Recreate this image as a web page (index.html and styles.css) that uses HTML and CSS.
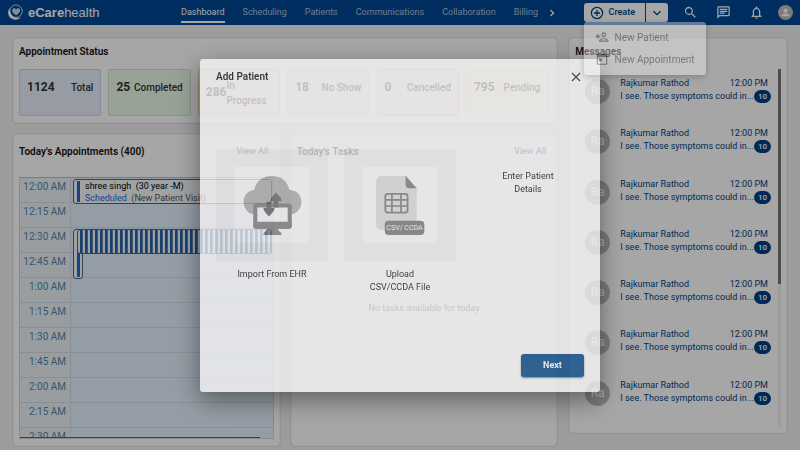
FILE: index.html
```html
<!DOCTYPE html>
<html lang="en">
<head>
<meta charset="utf-8">
<meta name="viewport" content="width=device-width, initial-scale=1">
<title>eCarehealth</title>
<link rel="stylesheet" href="styles.css">
</head>
<body>
<div class="app">
  <header class="topbar">
    <a class="brand" href="#">
      <svg class="brand-mark" viewBox="0 0 18 18" aria-hidden="true">
        <circle cx="9.5" cy="7.6" r="6.6" fill="none" stroke="#d5e3f5" stroke-width="1"/>
        <path d="M2.6 4.2C.4 8 .8 12.6 4.3 15.2c3.3 2.400 8.200 1.500 10.700-1.200-3 1.200-6.800.9-9.200-1.400C3.500 10.400 3 7.200 2.600 4.200z" fill="#fff"/>
        <path d="M9.800 11.800C6.600 9.900 5.200 8.300 5.500 6.300c.3-2 3-2.500 4.200-.6 1.300-1.900 4-1.300 4.100.8.100 2-1.500 3.600-4 5.300z" fill="#c6d9ef"/>
      </svg>
      <span class="brand-name"><b>eCare</b>health</span>
    </a>
    <nav class="nav">
      <a class="active" href="#">Dashboard</a>
      <a href="#">Scheduling</a>
      <a href="#">Patients</a>
      <a href="#">Communications</a>
      <a href="#">Collaboration</a>
      <a href="#">Billing</a>
      <svg class="nav-more" viewBox="0 0 6 8" aria-hidden="true"><path d="M1.500 1l3 3-3 3" fill="none" stroke="#fff" stroke-width="1.300"/></svg>
    </nav>
    <div class="tools">
      <div class="create">
        <button class="create-main" type="button">
          <svg viewBox="0 0 14 14" aria-hidden="true"><circle cx="7" cy="7" r="5.600"/><path d="M7 4v6M4 7h6"/></svg>Create
        </button>
        <button class="create-more" type="button" aria-label="More create options">
          <svg viewBox="0 0 14 14" aria-hidden="true"><path d="M3.500 5.200L7 8.700l3.500-3.500"/></svg>
        </button>
        <div class="menu">
          <a href="#"><svg viewBox="0 0 24 24" aria-hidden="true"><path d="M15 12a4 4 0 1 0 0-8 4 4 0 0 0 0 8zm0-6a2 2 0 1 1 0 4 2 2 0 0 1 0-4zm0 8c-2.700 0-8 1.300-8 4v2h16v-2c0-2.700-5.300-4-8-4zm-6 4c.2-.7 3.300-2 6-2s5.800 1.300 6 2zM6 15v-3h3v-2H6V7H4v3H1v2h3v3z"/></svg>New Patient</a>
          <a href="#"><svg viewBox="0 0 24 24" aria-hidden="true"><path d="M19 4h-1V2h-2v2H8V2H6v2H5a2 2 0 0 0-2 2v14c0 1.100.9 2 2 2h14a2 2 0 0 0 2-2V6a2 2 0 0 0-2-2zm0 16H5V9h14zM7 11h5v5H7z"/></svg>New Appointment</a>
        </div>
      </div>
      <button class="tool" type="button" aria-label="Search"><svg viewBox="0 0 24 24"><path d="M15.500 14h-.8l-.3-.3a6.500 6.500 0 1 0-.7.7l.3.3v.8l5 5 1.500-1.500zm-6 0a4.500 4.500 0 1 1 0-9 4.500 4.500 0 0 1 0 9z"/></svg></button>
      <button class="tool" type="button" aria-label="Chat"><svg viewBox="0 0 24 24"><path d="M4 4h16v12H5.200L4 17.200zm0-2a2 2 0 0 0-2 2v18l4-4h14a2 2 0 0 0 2-2V4a2 2 0 0 0-2-2zm2 10h8v2H6zm0-3h12v2H6zm0-3h12v2H6z"/></svg></button>
      <button class="tool" type="button" aria-label="Notifications"><svg viewBox="0 0 24 24"><path d="M12 22a2 2 0 0 0 2-2h-4c0 1.100.9 2 2 2zm6-6v-5c0-3.100-1.600-5.600-4.500-6.300V4a1.500 1.500 0 0 0-3 0v.7C7.600 5.400 6 7.900 6 11v5l-2 2v1h16v-1zm-2 1H8v-6c0-2.500 1.500-4.500 4-4.500s4 2 4 4.500z"/></svg></button>
      <button class="tool profile" type="button" aria-label="Profile"><svg viewBox="0 0 16 16"><circle cx="8" cy="8" r="8" fill="#bdbdbd"/><circle cx="8" cy="6" r="2.300" fill="#fff"/><path d="M3.500 12c0-2 2.500-3 4.500-3s4.500 1 4.500 3z" fill="#fff"/></svg></button>
    </div>
  </header>

  <main class="board">
    <div class="left">
      <section class="card status">
        <h2>Appointment Status</h2>
        <div class="stats">
          <div class="stat blue"><b>1124</b><span>Total</span></div>
          <div class="stat green"><b>25</b><span>Completed</span></div>
          <div class="stat orange"><b>286</b><span>In Progress</span></div>
          <div class="stat gray"><b>18</b><span>No Show</span></div>
          <div class="stat red"><b>0</b><span>Cancelled</span></div>
          <div class="stat yellow"><b>795</b><span>Pending</span></div>
        </div>
      </section>
      <section class="card schedule">
        <div class="card-head"><h2>Today's Appointments (400)</h2><a href="#">View All</a></div>
        <div class="calendar">
          <div class="slot"><span>12:00 AM</span></div>
          <div class="slot"><span>12:15 AM</span></div>
          <div class="slot"><span>12:30 AM</span></div>
          <div class="slot"><span>12:45 AM</span></div>
          <div class="slot"><span>1:00 AM</span></div>
          <div class="slot"><span>1:15 AM</span></div>
          <div class="slot"><span>1:30 AM</span></div>
          <div class="slot"><span>1:45 AM</span></div>
          <div class="slot"><span>2:00 AM</span></div>
          <div class="slot"><span>2:15 AM</span></div>
          <div class="slot"><span>2:30 AM</span></div>
          <div class="event visit">
            <p>shree singh &nbsp;(30 year -M)</p>
            <p class="detail"><em>Scheduled</em> &nbsp;(New Patient Visit)</p>
          </div>
          <div class="event long"></div>
          <div class="event stack"></div>
          <div class="hscroll"></div>
        </div>
      </section>
      <section class="card tasks">
        <div class="card-head"><h2>Today's Tasks</h2><a href="#">View All</a></div>
        <p class="empty">No tasks available for today</p>
      </section>
    </div>

    <section class="card messages">
      <h2>Messages</h2>
      <ul>
        <li><i>Ra</i><div><p><span>Rajkumar Rathod</span><time>12:00 PM</time></p><p><span>I see. Those symptoms could in...</span><b>10</b></p></div></li>
        <li><i>Ra</i><div><p><span>Rajkumar Rathod</span><time>12:00 PM</time></p><p><span>I see. Those symptoms could in...</span><b>10</b></p></div></li>
        <li><i>Ra</i><div><p><span>Rajkumar Rathod</span><time>12:00 PM</time></p><p><span>I see. Those symptoms could in...</span><b>10</b></p></div></li>
        <li><i>Ra</i><div><p><span>Rajkumar Rathod</span><time>12:00 PM</time></p><p><span>I see. Those symptoms could in...</span><b>10</b></p></div></li>
        <li><i>Ra</i><div><p><span>Rajkumar Rathod</span><time>12:00 PM</time></p><p><span>I see. Those symptoms could in...</span><b>10</b></p></div></li>
        <li><i>Ra</i><div><p><span>Rajkumar Rathod</span><time>12:00 PM</time></p><p><span>I see. Those symptoms could in...</span><b>10</b></p></div></li>
        <li><i>Ra</i><div><p><span>Rajkumar Rathod</span><time>12:00 PM</time></p><p><span>I see. Those symptoms could in...</span><b>10</b></p></div></li>
      </ul>
      <div class="vscroll"></div>
    </section>
  </main>
</div>

<div class="backdrop">
  <div class="dialog" role="dialog" aria-labelledby="dialog-title">
    <div class="dialog-head">
      <h2 id="dialog-title">Add Patient</h2>
      <button class="close" type="button" aria-label="Close"><svg viewBox="0 0 10 10"><path d="M1 1l8 8M9 1L1 9" fill="none" stroke="#222" stroke-width="1.200"/></svg></button>
    </div>
    <div class="options">
      <button class="option" type="button">
        <span class="tile">
          <svg viewBox="0 0 75 75" aria-hidden="true">
            <rect width="75" height="75" fill="#fff"/>
            <path d="M20 47C13 46 9.500 40 9.500 34.500 9.500 27.500 14 23.500 20 22.500 22 13.500 29 9 37.500 9S53 14 54.500 22.500C62 23 66.500 28 66.500 34.500 66.500 41 62 46.500 55 47z" fill="#b2b2b2"/>
            <rect x="21" y="38" width="34" height="21" rx="1" fill="#fff" stroke="#828282" stroke-width="4"/>
            <path d="M19 54h38v4a3 3 0 0 1-3 3H22a3 3 0 0 1-3-3zM33 61h10l2 3q2 .5 2 3H29q0-2.500 2-3z" fill="#828282"/>
            <path d="M34.500 34v8M41.500 40v-8" stroke="#686868" stroke-width="5"/>
            <path d="M29.500 41h10q0 2-5 7-5-5-5-7zM36.500 33h10q0-2-5-7-5 5-5 7z" fill="#686868" stroke="#686868" stroke-linejoin="round"/>
          </svg>
        </span>
        <span>Import From EHR</span>
      </button>
      <button class="option" type="button">
        <span class="tile">
          <svg viewBox="0 0 75 75" aria-hidden="true">
            <rect width="75" height="75" fill="#fff"/>
            <path d="M19 9h25l10 12v41H19a5 5 0 0 1-5-5V14a5 5 0 0 1 5-5z" fill="#e0e0e0"/>
            <path d="M43 9l11 12h-7a4 4 0 0 1-4-4z" fill="#7c7c7c"/>
            <g fill="none" stroke="#7c7c7c" stroke-width="1.700"><rect x="23" y="26.500" width="22" height="18.500" rx="2.500"/><path d="M23 32.500h22M23 38.500h22M29.500 26.500V45M38.500 26.500V45"/></g>
            <rect x="22.500" y="53" width="39" height="14" rx="3.500" fill="#7c7c7c"/>
            <text class="file-tag" x="42" y="62.500" text-anchor="middle">CSV/ CCDA</text>
          </svg>
        </span>
        <span>Upload<br>CSV/CCDA File</span>
      </button>
      <button class="option plain" type="button"><span>Enter Patient<br>Details</span></button>
    </div>
    <div class="dialog-foot"><button class="next" type="button">Next</button></div>
  </div>
</div>
</body>
</html>
```
FILE: styles.css
```css
* { box-sizing: border-box; }

body {
  margin: 0;
  font: 9px/13px Roboto, sans-serif;
  color: #111;
  background: #f0f0f0;
}

h2, p, ul { margin: 0; padding: 0; }
ul { list-style: none; }
a { color: inherit; text-decoration: none; }
button { font: inherit; color: inherit; border: 0; padding: 0; background: none; }
svg { display: block; }
h2 { font-size: 10px; line-height: 14px; font-weight: 600; }

.app { height: 100vh; display: flex; flex-direction: column; overflow: hidden; }

/* Top bar */
.topbar {
  flex: none;
  height: 25px;
  padding: 0 7px;
  display: flex;
  align-items: center;
  background: #004794;
  color: #fff;
}
.brand { display: flex; align-items: center; gap: 4px; width: 174px; }
.brand-mark { width: 17px; height: 17px; }
.brand-name { font: 13px/16px "Liberation Sans", sans-serif; }
.nav { display: flex; align-items: center; gap: 18px; height: 25px; }
.nav a { padding: 3px 0 2px; border-bottom: 2px solid transparent; color: #a9c0dc; }
.nav .active { color: #fff; border-color: #fff; }
.nav-more { width: 6px; height: 8px; margin-left: -7px; }
.tools { margin-left: auto; display: flex; align-items: center; gap: 15px; }
.create { position: relative; display: flex; gap: 1px; height: 19px; font-weight: 500; color: #004080; }
.create svg { width: 14px; height: 14px; fill: none; stroke: #004080; stroke-width: 1.3; }
.create button { display: flex; align-items: center; background: #fff; }
.create-main { gap: 5px; padding: 0 10px 0 6px; border-radius: 3px 0 0 3px; }
.create-more { padding: 0 4px; border-radius: 0 3px 3px 0; }
.tool svg { width: 15px; height: 15px; fill: #fff; }
.tool + .tool { margin-left: 3px; }
.tool + .profile { margin-left: -1px; }
.menu {
  position: absolute;
  z-index: 2;
  top: 19px;
  left: 0;
  padding: 4px 11px 5px;
  border-radius: 3px;
  background: #f0f0f0;
  box-shadow: 0 2px 6px #0008;
  opacity: .4;
}
.menu a { display: flex; align-items: center; gap: 6px; height: 22px; font-size: 10px; font-weight: 400; color: #333; white-space: nowrap; }
.menu svg { fill: #333; stroke: none; }

/* Dashboard */
.board {
  flex: 1;
  min-height: 0;
  padding: 13px 13px 4px;
  display: grid;
  grid-template: minmax(0, 1fr) / 5fr 2fr;
  gap: 12px;
}
.left {
  display: grid;
  grid-template: auto minmax(0, 1fr) / 1fr 1fr;
  gap: 11px;
  min-height: 0;
}
.card { background: #fff; border: 1px solid #f6f6f6; border-radius: 4px; box-shadow: 0 0 2px #0003; padding: 6px 5px; }
.card-head { display: flex; justify-content: space-between; padding: 4px 5px 0 0; }
.card-head a { font-weight: 500; color: #1f66ae; }
.status { grid-column: 1 / 3; padding-right: 8px; }
.stats { display: grid; grid-template-columns: repeat(6, 1fr); gap: 7px; margin-top: 10px; }
.stat {
  height: 47px;
  padding: 0 7px 10px;
  display: flex;
  align-items: center;
  justify-content: space-between;
  border: 1px solid;
  border-radius: 2px;
  font-size: 10px;
  line-height: 15px;
  font-weight: 500;
  color: #333;
}
.stat b { font-size: 12px; font-weight: 700; }
.blue { background: #e9f0fc; border-color: #c6d8f4; }
.green { background: #e9f7e7; border-color: #cae6c8; }
.orange { background: #fdf6ea; border-color: #f3d9ad; padding-bottom: 0; }
.gray { background: #f5f7fa; border-color: #e4e7ec; }
.red { background: #fcf3f1; border-color: #f3cdc8; }
.yellow { background: #fdfae8; border-color: #f3e8b0; }

.schedule, .tasks { display: flex; flex-direction: column; min-height: 0; }
.calendar {
  position: relative;
  flex: 1;
  min-height: 0;
  margin-top: 18px;
  overflow: hidden;
  border: 1px solid #ccd5dc;
  border-top-color: #b5bec5;
  background: #e4f2fd;
}
.slot { height: 25px; border-bottom: 1px solid #d2dde5; background: linear-gradient(90deg, #ecf2f6 50px, #d2dde5 50px 51px, #e4f2fd 51px); }
.slot span { display: block; width: 46px; padding-top: 2px; text-align: right; font-size: 10px; color: #4e86b0; }
.event { position: absolute; border: 1px solid #456789; border-radius: 3px; }
.visit { top: 1px; left: 53px; right: 1px; height: 25px; padding: 0 0 0 11px; background: #f4f8fb; color: #000; }
.visit p { line-height: 12px; white-space: nowrap; }
.visit .detail { color: #555; }
.visit em { font-style: normal; color: #2967d8; }
.visit::before, .long::before { content: ""; position: absolute; top: 1px; bottom: 1px; left: 3px; width: 3px; background: #2967c8; }
.long { top: 51px; left: 53px; width: 10px; height: 50px; background: #f4f8fb; }
.stack {
  top: 51px;
  left: 58px;
  right: 1px;
  height: 25px;
  border-width: 1px 0;
  background: repeating-linear-gradient(90deg, #f0f6fb 0 2px, #2461b0 2px 4px, #6484a8 4px 5px);
}
.hscroll { position: absolute; left: 0; bottom: 0; width: 95%; height: 1px; background: #666; }
.empty { margin: auto; padding-top: 18px; color: #555; }

.messages { position: relative; display: flex; flex-direction: column; margin-bottom: 13px; overflow: hidden; }
.messages ul { flex: 1; display: grid; grid-auto-rows: 1fr; margin-top: 15px; }
.messages li { display: flex; gap: 10px; margin-left: 10px; padding-right: 10px; color: #003f84; }
.messages i {
  flex: none;
  width: 25px;
  height: 25px;
  margin-top: 5px;
  border-radius: 50%;
  background: #bdbdbd;
  color: #fff;
  font: 500 12px/25px Roboto, sans-serif;
  text-align: center;
}
.messages li div { flex: 1; min-width: 0; padding-top: 3px; }
.messages p { display: flex; align-items: center; justify-content: space-between; height: 13px; white-space: nowrap; }
.messages time { padding-right: 3px; }
.messages b { padding: 0 4px; border-radius: 7px; background: #003f84; color: #fff; font-size: 8px; font-weight: 500; }
.vscroll { position: absolute; top: 30px; bottom: 5px; right: 5px; width: 3px; background: linear-gradient(#777 60%, #efefef 60%); }

/* Dialog */
.backdrop { position: fixed; inset: 0; display: grid; place-items: center; background: rgba(0, 0, 0, .35); }
.dialog {
  width: 50%;
  min-width: 398px;
  padding: 10px 16px 15px;
  border-radius: 3px;
  background: #fff;
  box-shadow: 0 8px 24px #0009;
  opacity: .72;
}
.dialog-head { display: flex; align-items: center; justify-content: space-between; }
.close { padding: 3px; }
.close svg { width: 10px; height: 10px; }
.options { display: grid; grid-template-columns: repeat(3, 1fr); gap: 16px; margin-top: 64px; }
.option { display: flex; flex-direction: column; align-items: center; gap: 7px; }
.tile { width: 100%; display: grid; place-items: center; padding: 18px; border-radius: 3px; background: #f5f5f5; }
.tile svg { width: 100%; }
.plain { padding-top: 21px; }
.file-tag { font: 7px Roboto, sans-serif; fill: #fff; }
.dialog-foot { display: flex; justify-content: flex-end; margin-top: 60px; }
.next {
  width: 63px;
  height: 23px;
  border-radius: 3px;
  background: #004889;
  color: #fff;
  font-weight: 700;
  box-shadow: 0 1px 2px #0008;
}
```
